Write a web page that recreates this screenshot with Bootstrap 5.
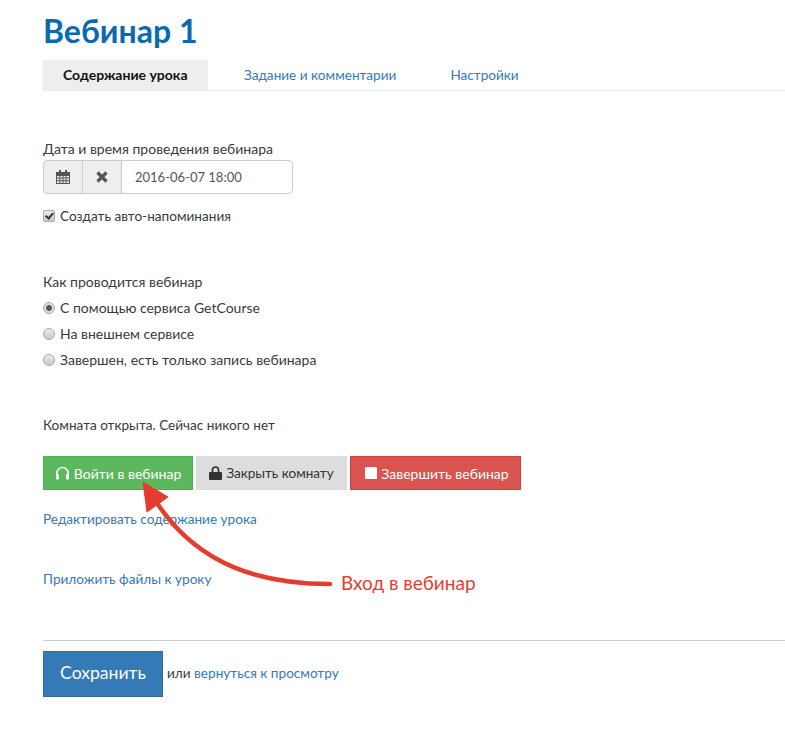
<!DOCTYPE html>
<html lang="ru"><head><meta charset="utf-8">
<link href="https://cdn.jsdelivr.net/npm/bootstrap@5.3.0/dist/css/bootstrap.min.css" rel="stylesheet">
<style>
html,body{background:#fff}
body{font-family:"Lato","Open Sans",sans-serif;font-size:14px;line-height:20px;color:#3a3a3a;height:739px;overflow:hidden;position:relative}
a{color:#337ab7;text-decoration:none}
.tight{font-size:13.6px}
.page-wrap{padding:0 0 0 43px}
.title-main{font-size:32px;font-weight:700;color:#0a6ab0;line-height:40px;margin:11px 0 9px;}
.tabs-bar{display:flex;border-bottom:1px solid #eee;height:31px}
.tabs-bar a{display:block;height:30px;line-height:30px;padding:0 20px;margin-right:14px;font-size:13.6px}
.tabs-bar a.on{background:#eee;color:#111;font-weight:700;margin-right:16px;font-size:14px;width:165px;white-space:nowrap}
.lbl{height:20px;margin-bottom:0}
.dt-group{width:250px;height:34px;margin-top:1px}
.dt-add{width:40px;height:34px;background:#eee;border:1px solid #ccc;display:flex;align-items:center;justify-content:center;margin-right:-1px;color:#555}
.dt-add:first-child{border-radius:4px 0 0 4px}
.dt-val{flex:1;height:34px;border:1px solid #ccc;border-radius:0 4px 4px 0;padding:0 13px;line-height:33px;color:#555;margin:0;font-size:13px}
.opt{display:flex;align-items:center;height:20px;gap:5px;margin:0}
.opt input{appearance:none;-webkit-appearance:none;margin:0;width:12px;height:12px;flex:none;background:linear-gradient(#ececec,#c8c8c8);border:1px solid #aaa;position:relative}
.opt input[type=radio]{border-radius:50%}
.opt input[type=radio]:checked{background:radial-gradient(circle,#555 0 2.6px,#dcdcdc 3.2px)}
.opt input[type=checkbox]{border-radius:2px}
.opt input[type=checkbox]:checked::after{content:"";position:absolute;left:3px;top:-.5px;width:4.5px;height:8px;border:solid #333;border-width:0 2px 2px 0;transform:rotate(40deg)}
.act-btn{height:34px;border:1px solid;padding:0;display:inline-flex;align-items:center;justify-content:center;gap:4px;border-radius:0;font-size:14px}
.b-go{width:150px;background:#5cb85c;border-color:#4cae4c;color:#fff}
.b-close{width:151px;background:#ddd;border-color:#ddd;color:#333;font-size:13.5px}
.b-end{width:171px;background:#d9534f;border-color:#d43f3a;color:#fff;padding-left:3px}
.rule{border:0;border-top:1px solid #ccc;opacity:1;margin:0}
.b-save{width:120px;height:46px;background:#337ab7;border:1px solid #2e6da4;color:#fff;font-size:17.6px;border-radius:0;padding:0 0 2px}
.arrow-layer{position:absolute;left:0;top:0;pointer-events:none}
.arrow-text{position:absolute;left:341px;top:571px;color:#e43d30;font-size:19px;line-height:24px}
</style></head><body>
<div class="page-wrap">
<h1 class="title-main">Вебинар 1</h1>
<div class="tabs-bar"><a class="on" href="#">Содержание урока</a><a href="#">Задание и комментарии</a><a href="#">Настройки</a></div>
<div class="lbl" style="margin-top:48px">Дата и время проведения вебинара</div>
<div class="d-flex dt-group">
<span class="dt-add"><svg width="14" height="14" viewBox="0 0 14 14" fill="#555"><rect x="3" y="0" width="2" height="3"/><rect x="9" y="0" width="2" height="3"/><path d="M0 2h14v12H0zM1 6v1.6h2.4V6zm3.4 0v1.6h2.1V6zm3.1 0v1.6h2.1V6zm3.1 0v1.6H13V6zM1 8.6v1.6h2.4V8.6zm3.4 0v1.6h2.1V8.6zm3.1 0v1.6h2.1V8.6zm3.1 0v1.6H13V8.6zM1 11.2V13h2.4v-1.8zm3.4 0V13h2.1v-1.8zm3.1 0V13h2.1v-1.8zm3.1 0V13H13v-1.8z" fill-rule="evenodd"/></svg></span>
<span class="dt-add"><svg width="12" height="12" viewBox="0 0 12 12"><path d="M1.5 1.5l9 9M10.5 1.5l-9 9" stroke="#555" stroke-width="3.2"/></svg></span>
<span class="dt-val">2016-06-07 18:00</span></div>
<label class="opt tight" style="margin-top:12px"><input type="checkbox" checked>Создать авто-напоминания</label>
<div class="lbl" style="margin-top:46px">Как проводится вебинар</div>
<label class="opt" style="margin-top:6px"><input type="radio" name="w" checked>С помощью сервиса GetCourse</label>
<label class="opt" style="margin-top:6px"><input type="radio" name="w">На внешнем сервисе</label>
<label class="opt" style="margin-top:6px"><input type="radio" name="w">Завершен, есть только запись вебинара</label>
<div class="lbl tight" style="margin-top:45px">Комната открыта. Сейчас никого нет</div>
<div class="d-flex" style="margin-top:21px;gap:3px">
<button class="btn act-btn b-go"><svg width="15" height="14" viewBox="0 0 15 14"><path d="M2 9V7a5.5 5.5 0 0 1 11 0v2" fill="none" stroke="#fff" stroke-width="1.7"/><rect x="1" y="8" width="3" height="5.5" rx="1" fill="#fff"/><rect x="11" y="8" width="3" height="5.5" rx="1" fill="#fff"/></svg>Войти в вебинар</button>
<button class="btn act-btn b-close"><svg width="13" height="14" viewBox="0 0 13 14"><path d="M3.5 6V4a3 3 0 0 1 6 0v2" fill="none" stroke="#333" stroke-width="1.7"/><rect x="0" y="6" width="13" height="8" rx="1" fill="#333"/></svg>Закрыть комнату</button>
<button class="btn act-btn b-end"><svg width="12" height="12" viewBox="0 0 12 12"><rect width="12" height="12" rx="1" fill="#fff"/></svg>Завершить вебинар</button>
</div>
<div class="tight" style="margin-top:19px"><a href="#">Редактировать содержание урока</a></div>
<div class="tight" style="margin-top:40px"><a href="#">Приложить файлы к уроку</a></div>
<hr class="rule" style="margin-top:51px">
<div class="d-flex" style="margin-top:10px"><button class="btn b-save">Сохранить</button><div class="tight" style="margin:12px 0 0 4px">или <a href="#">вернуться к просмотру</a></div></div>
</div>
<svg class="arrow-layer" width="785" height="739" viewBox="0 0 785 739"><path d="M330 584C265 584 200 568 157 503" fill="none" stroke="#e43d30" stroke-width="4.5" stroke-linecap="round"/><path d="M143 482L168 497L147 512Z" fill="#e43d30" stroke="#e43d30" stroke-linejoin="round"/></svg>
<div class="arrow-text">Вход в вебинар</div>
</body></html>
